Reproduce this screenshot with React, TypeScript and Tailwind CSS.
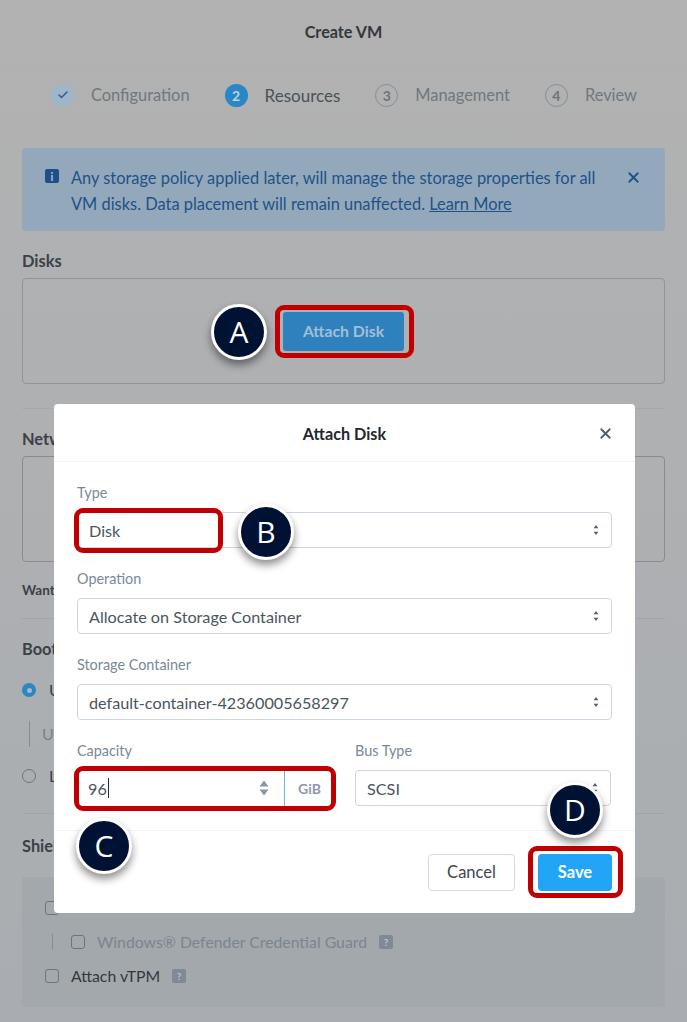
import { Check, X } from "lucide-react";

const font = "font-['Lato','Open_Sans',sans-serif]";

const Callout = ({ letter, className }: { letter: string; className: string }) => (
  <div
    className={`absolute flex h-[56px] w-[56px] items-center justify-center rounded-full border-[3px] border-white bg-[#001233] text-[30px] leading-none text-white shadow-[0_5px_8px_rgba(0,0,0,0.45)] font-['Open_Sans',sans-serif] ${className}`}
  >
    {letter}
  </div>
);

const Highlight = ({ className }: { className: string }) => (
  <div className={`absolute rounded-[9px] border-[5px] border-[#c00000] ${className}`} />
);

const Step = ({ mark, label, state }: { mark: string; label: string; state: "done" | "active" | "todo" }) => (
  <div className="flex items-center gap-[17px]">
    {state === "done" && (
      <span className="flex h-[23px] w-[23px] items-center justify-center rounded-full bg-[#9fb6c8] text-[#2a5f96]">
        <Check size={12} strokeWidth={3} />
      </span>
    )}
    {state === "active" && (
      <span className="flex h-[23px] w-[23px] items-center justify-center rounded-full bg-[#2a86c4] text-[14px] font-bold text-[#b9d4e6]">
        {mark}
      </span>
    )}
    {state === "todo" && (
      <span className="flex h-[23px] w-[23px] items-center justify-center rounded-full border border-[#868d93] text-[14px] font-bold text-[#6c747b]">
        {mark}
      </span>
    )}
    <span className={state === "active" ? "text-[17px] text-[#4a5258]" : "text-[16.4px] text-[#6f7880]"}>{label}</span>
  </div>
);

const Help = () => (
  <span className="flex h-[14px] w-[14px] items-center justify-center rounded-[2px] bg-[#7f8a96] text-[10px] font-bold text-[#c0c5ca]">
    ?
  </span>
);

const Box = () => <span className="h-[14px] w-[14px] rounded-[3px] border-[1.5px] border-[#6b7580]" />;

const Updown = () => (
  <svg width="6" height="12" viewBox="0 0 6 12" className="text-[#55606c]">
    <path d="M3 1 5.4 4.2H.6z M3 11 .6 7.8h4.8z" fill="currentColor" />
  </svg>
);

const Label = ({ children }: { children: string }) => (
  <div className="mb-[12px] h-[15px] text-[14.4px] leading-[15px] text-[#7a8898]">{children}</div>
);

const Select = ({ value, className = "" }: { value: string; className?: string }) => (
  <div
    className={`flex h-[36px] items-center justify-between rounded-[4px] border-[1.5px] border-[#ced5e0] pl-[11px] pr-[12px] text-[16.2px] text-[#4a5560] ${className}`}
  >
    <span className="pt-[3px]">{value}</span>
    <Updown />
  </div>
);

const sectionTitle = "h-[19px] text-[16.4px] font-bold leading-[19px] text-[#3b4148]";

export default function App() {
  return (
    <div className={`relative h-[1022px] w-[687px] overflow-hidden bg-gradient-to-b from-[#b2b2b2] to-[#a9adb1] ${font}`}>
      {/* wizard page behind the dialog */}
      <div className="flex h-[66px] items-center justify-center border-b border-[#aeb1b4] text-[16.2px] font-bold text-[#33383d]">
        Create VM
      </div>
      <div className="flex h-[58px] items-center justify-between border-b border-[#aeb1b4] pl-[51px] pr-[50px] pt-[2px]">
        <Step mark="" label="Configuration" state="done" />
        <Step mark="2" label="Resources" state="active" />
        <Step mark="3" label="Management" state="todo" />
        <Step mark="4" label="Review" state="todo" />
      </div>

      <div className="px-[22px]">
        <div className="mt-[24px] flex h-[83px] rounded-[4px] bg-[#93a9bb] pl-[23px] pr-[23px] pt-[17px]">
          <span className="mt-[4px] flex h-[14px] w-[14px] shrink-0 items-center justify-center rounded-[2px] bg-[#1d4f8b] text-[11px] font-black leading-none text-[#a9bccb]">
            i
          </span>
          <p className="ml-[12px] flex-1 pr-[8px] text-[16.4px] leading-[26px] text-[#1f5187]">
            Any storage policy applied later, will manage the storage properties for all VM disks. Data placement will
            remain unaffected. <span className="underline">Learn More</span>
          </p>
          <X size={17} strokeWidth={2.5} className="mt-[4px] shrink-0 text-[#1d4f8b]" />
        </div>

        <h3 className={`mt-[20px] ${sectionTitle}`}>Disks</h3>
        <div className="mt-[8px] flex h-[106px] items-center justify-center rounded-[4px] border-[1.5px] border-[#8d959e]">
          <button className="flex h-[39px] w-[121px] items-center justify-center rounded-[3px] bg-[#2e81bd] text-[15.8px] font-bold text-[#a2bfd6]">
            Attach Disk
          </button>
        </div>
        <div className="mt-[24px] border-t border-[#a5a9ae]" />

        <h3 className={`mt-[20px] ${sectionTitle}`}>Network Adapters</h3>
        <div className="mt-[8px] h-[106px] rounded-[4px] border-[1.5px] border-[#848c95]" />
        <p className="mt-[20px] h-[16px] text-[13.5px] font-bold leading-[16px] text-[#3b4148]">Want a network?</p>
        <div className="mt-[20px] border-t border-[#a1a5aa]" />

        <h3 className={`mt-[20px] ${sectionTitle}`}>Boot Configuration</h3>
        <div className="mt-[20px] flex items-center gap-[13px]">
          <span className="flex h-[14px] w-[14px] items-center justify-center rounded-full bg-[#2a86c4]">
            <span className="h-[5px] w-[5px] rounded-full bg-[#b0b5ba]" />
          </span>
          <span className="text-[16px] text-[#3b4148]">UEFI BIOS Mode</span>
        </div>
        <div className="ml-[7px] mt-[19px] flex h-[26px] items-center gap-[12px] border-l border-[#858c94] pl-[12px] text-[16px] text-[#7a828a]">
          Use Secure Boot
        </div>
        <div className="mt-[17px] flex items-center gap-[13px]">
          <span className="h-[14px] w-[14px] rounded-full border-[1.5px] border-[#6b7580]" />
          <span className="text-[16px] text-[#3b4148]">Legacy BIOS Mode</span>
        </div>
        <div className="mt-[25px] border-t border-[#a0a4a9]" />

        <h3 className={`mt-[22px] ${sectionTitle}`}>Shielded VM</h3>
        <div className="mt-[22px] flex h-[130px] flex-col gap-[14px] rounded-[4px] bg-[#a3a8ad] pl-[23px] pt-[21px]">
          <div className="flex h-[20px] items-center gap-[12px] text-[15.8px] text-[#33383d]">
            <Box />
            <span className="h-[20px] overflow-hidden pb-[6px] leading-[14px]">Secure Boot</span>
          </div>
          <div className="ml-[7px] flex h-[20px] items-center gap-[12px] text-[15.8px] text-[#7a858f]">
            <span className="h-[16px] border-l border-[#858c94] pr-[6px]" />
            <Box />
            Windows® Defender Credential Guard
            <Help />
          </div>
          <div className="flex h-[20px] items-center gap-[12px] text-[15.8px] text-[#33383d]">
            <Box />
            Attach vTPM
            <Help />
          </div>
        </div>
      </div>

      {/* Attach Disk dialog */}
      <div className="absolute left-[54px] top-[404px] flex h-[509px] w-[581px] flex-col rounded-[4px] bg-white">
        <div className="relative flex h-[58px] items-center justify-center border-b border-[#f1f3f5] pt-[3px] text-[16.2px] font-bold text-[#22272e]">
          Attach Disk
          <X size={17} strokeWidth={2.5} className="absolute right-[21px] top-[21px] text-[#4e5a68]" />
        </div>
        <div className="flex flex-1 flex-col px-[23px] pt-[23px]">
          <Label>Type</Label>
          <Select value="Disk" />
          <div className="h-[23px]" />
          <Label>Operation</Label>
          <Select value="Allocate on Storage Container" />
          <div className="h-[23px]" />
          <Label>Storage Container</Label>
          <Select value="default-container-42360005658297" />
          <div className="h-[23px]" />
          <div className="flex gap-[21px]">
            <div className="w-[257px]">
              <Label>Capacity</Label>
              <div className="flex h-[36px] items-center rounded-[4px] pl-[11px] text-[16.2px] text-[#4a5560]">
                <span className="pt-[3px]">96</span>
                <span className="ml-[1px] h-[20px] border-l border-[#22272e]" />
                <span className="ml-auto mr-[15px] flex">
                  <svg width="10" height="18" viewBox="0 0 10 18" className="text-[#8d97a2]">
                    <path d="M5 1.5 9.5 7.5H.5z M5 16.5 .5 10.5h9z" fill="currentColor" />
                  </svg>
                </span>
                <span className="flex h-full w-[50px] items-center justify-center border-l border-[#6cb2e8] text-[14px] font-bold text-[#8c98a6]">
                  GiB
                </span>
              </div>
            </div>
            <div className="w-[256px]">
              <Label>Bus Type</Label>
              <Select value="SCSI" />
            </div>
          </div>
        </div>
        <div className="flex h-[83px] justify-end gap-[23px] border-t border-[#f1f3f5] pr-[23px] pt-[23px]">
          <button className="h-[37px] w-[87px] rounded-[4px] border-[1.5px] border-[#d5dae2] text-[16.5px] text-[#3e4750]">
            Cancel
          </button>
          <button className="h-[37px] w-[74px] rounded-[4px] bg-[#22a5f7] text-[16.5px] font-bold text-white">Save</button>
        </div>
      </div>

      {/* tutorial annotations */}
      <Highlight className="left-[275px] top-[305px] h-[53px] w-[139px]" />
      <Highlight className="left-[74px] top-[508px] h-[45px] w-[149px]" />
      <Highlight className="left-[74px] top-[766px] h-[45px] w-[262px]" />
      <Highlight className="left-[528px] top-[846px] h-[52px] w-[95px]" />
      <Callout letter="A" className="left-[211px] top-[304px]" />
      <Callout letter="B" className="left-[238px] top-[504px]" />
      <Callout letter="C" className="left-[76px] top-[818px]" />
      <Callout letter="D" className="left-[547px] top-[782px]" />
    </div>
  );
}
